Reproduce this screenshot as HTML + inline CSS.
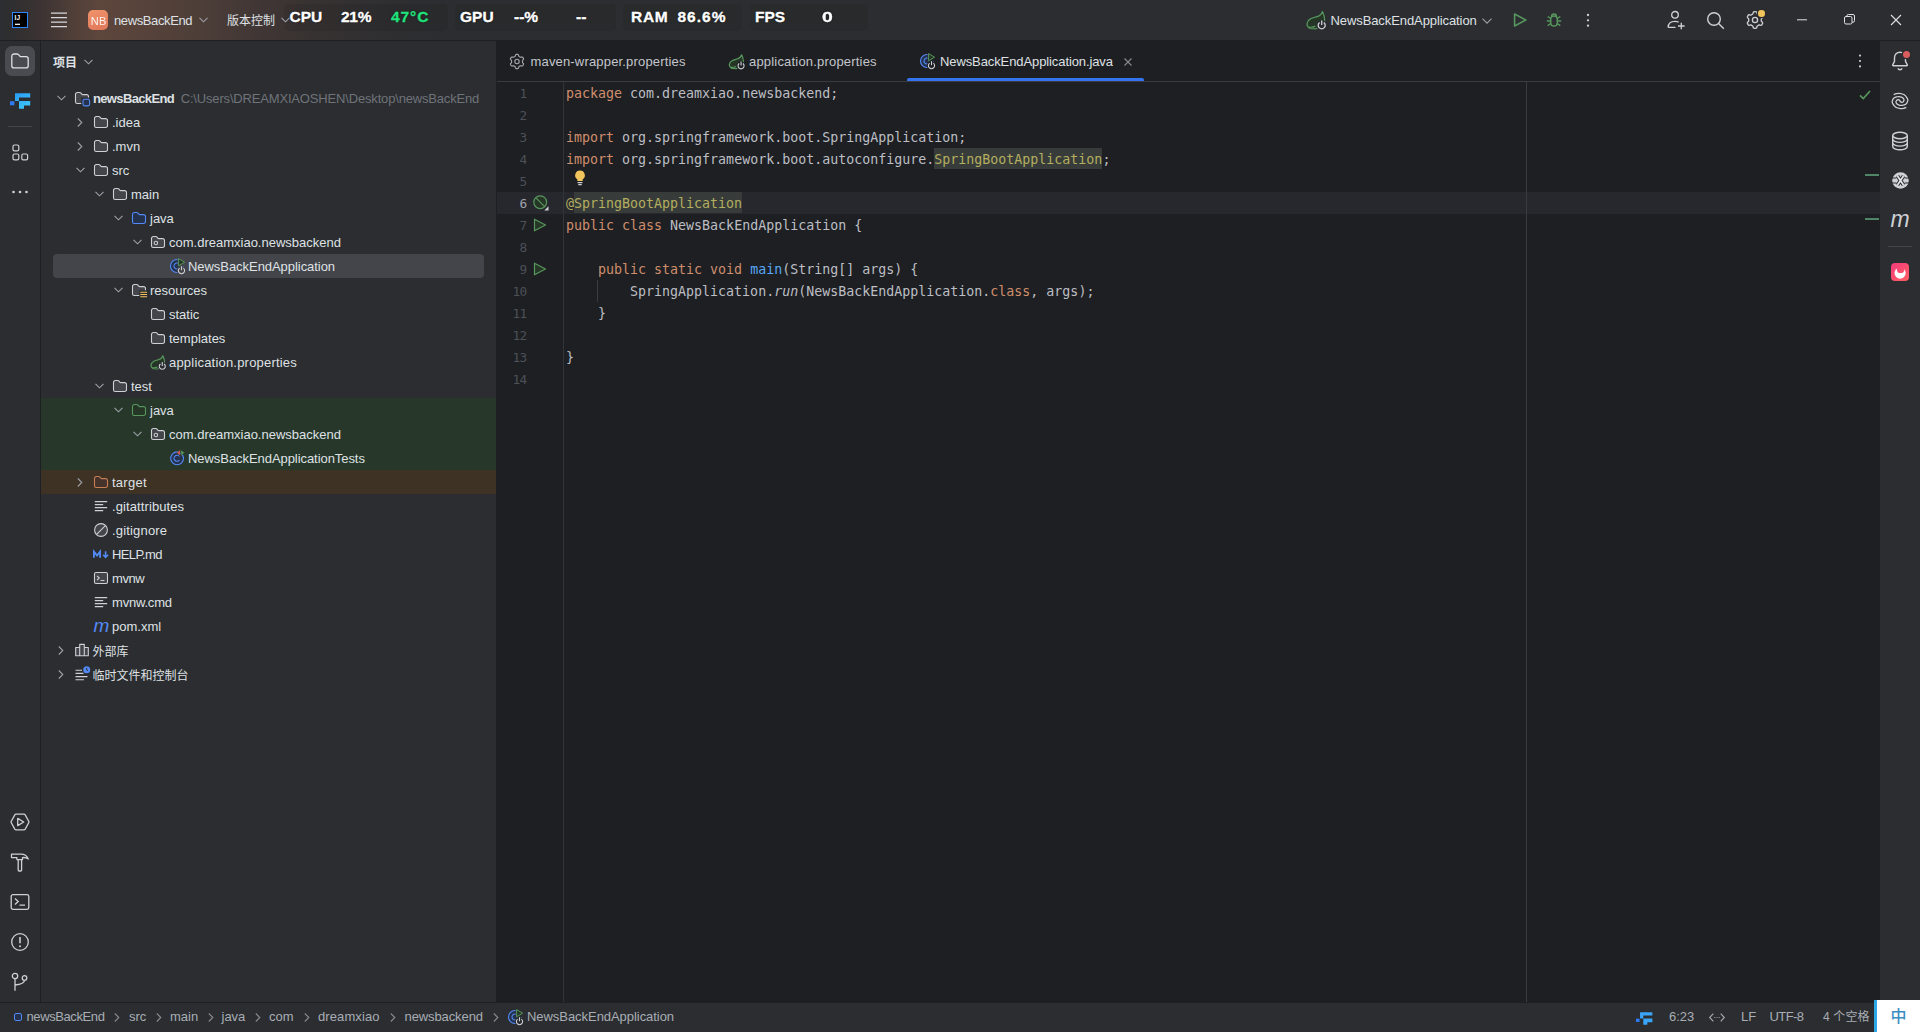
<!DOCTYPE html>
<html lang="zh-CN">
<head>
<meta charset="utf-8">
<title>newsBackEnd – NewsBackEndApplication.java</title>
<style>
*{box-sizing:border-box;margin:0;padding:0}
html,body{width:1920px;height:1032px;overflow:hidden;background:#1e1f22}
body{position:relative;font-family:"Liberation Sans","Noto Sans CJK SC",sans-serif;font-size:13px;color:#dfe1e5}
.abs{position:absolute}
svg{display:block;overflow:visible}
#titlebar{position:absolute;left:0;top:0;width:1920px;height:40px;background:#2b2d30;
  background-image:linear-gradient(90deg,#2b2d30 0px,#2f2e30 12px,#3b3332 40px,#4e3e38 70px,#5d463c 98px,#59443b 130px,#4d3e38 200px,#403635 260px,#393332 300px,#302f31 370px,#2b2d30 440px)}
#titlebar .t{position:absolute;white-space:nowrap;line-height:16px}
.hw{position:absolute;top:7px;font-weight:bold;font-size:15.5px;line-height:20px;color:#fff;white-space:nowrap;-webkit-text-stroke:0.3px #fff;text-shadow:0 0 2px rgba(0,0,0,.55)}
.hwbox{position:absolute;top:4px;height:27px;border-radius:5px;background:rgba(18,18,20,.11)}
#lstrip{position:absolute;left:0;top:40px;width:41px;height:962px;background:#2b2d30;border-right:1px solid #1e1f22}
#rstrip{position:absolute;left:1880px;top:40px;width:40px;height:962px;background:#2b2d30}
#proj{position:absolute;left:41px;top:40px;width:456px;height:962px;background:#2b2d30;border-right:1px solid #1e1f22}
.row{position:absolute;left:0;height:24px;width:455px}
.row .tx{position:absolute;top:1px;line-height:24px;white-space:nowrap;color:#dfe1e5}
.row .cj{font-size:12px;top:2px;margin-left:-0.5px}
.row svg{position:absolute}
#editor{position:absolute;left:497px;top:40px;width:1383px;height:962px;background:#1e1f22}
#tabs{position:absolute;left:0;top:0;width:1383px;height:42px;border-bottom:1px solid #393b40}
.tab{position:absolute;top:1px;height:41px;line-height:41px;white-space:nowrap;color:#c3c6cc}
.code,.ln{position:absolute;margin-top:1px;height:22px;line-height:22px;font-family:"DejaVu Sans Mono","Liberation Mono",monospace}
.code{left:69px;font-size:13.3px;white-space:pre;color:#bcbec4}
.ln{left:0;width:29.5px;text-align:right;font-size:12.8px;color:#4b5059;letter-spacing:-0.7px}
.hl{background:#373b39;padding:4px 0 2px}
.k{color:#cf8e6d}.a{color:#b3ae60}.f{color:#56a8f5}.i{font-style:italic}
#status{position:absolute;left:0;top:1002px;width:1920px;height:30px;background:#2b2d30;border-top:1px solid #1e1f22}
#status .s{position:absolute;top:0;line-height:28px;white-space:nowrap;color:#a8adb5}
</style>
</head>
<body>
<div id="titlebar">
  <svg class="abs" style="left:12px;top:12px" width="16" height="16" viewBox="0 0 16 16"><rect x="0.5" y="0.5" width="15" height="15" fill="#000" stroke="#2f86ff" stroke-width="1"/><rect x="3" y="11.7" width="5" height="1.2" fill="#fff"/></svg>
  <div class="t" style="left:14.5px;top:13.5px;font-size:6.5px;line-height:7px;font-weight:bold;color:#fff;letter-spacing:0.3px">IJ</div>
  <svg class="abs" style="left:51px;top:12px" width="16" height="16" viewBox="0 0 16 16" stroke="#d5d7dc" stroke-width="1.3"><path d="M0 1.1h16M0 5.6h16M0 10.1h16M0 14.6h16"/></svg>
  <div class="abs" style="left:88px;top:10px;width:20px;height:20px;border-radius:5px;background:linear-gradient(160deg,#f0946a,#e0765a)"></div>
  <div class="t" style="left:90.7px;top:13px;font-size:11px;line-height:16px;color:#fff;opacity:.92;letter-spacing:0.3px">NB</div>
  <div class="t" style="left:114px;top:13px;letter-spacing:-0.38px">newsBackEnd</div>
  <svg class="abs" style="left:198.5px;top:17px" width="9" height="6" viewBox="0 0 9 6" fill="none" stroke="#9da0a8" stroke-width="1.1"><path d="M0.500 0.8l4 4 4-4"/></svg>
  <div class="t" style="left:227px;top:13px;font-size:12px">版本控制</div>
  <div class="hwbox" style="left:284px;width:164px"></div>
  <div class="hwbox" style="left:455px;width:161px"></div>
  <div class="hwbox" style="left:623px;width:119px"></div>
  <div class="hwbox" style="left:750px;width:118px"></div>
  <svg class="abs" style="left:281px;top:17px" width="9" height="6" viewBox="0 0 9 6" fill="none" stroke="#9da0a8" stroke-width="1.1"><path d="M0.500 0.8l4 4 4-4"/></svg>
  <div class="hw" style="left:289.5px;">CPU</div>
  <div class="hw" style="left:341px;letter-spacing:-0.3px">21%</div>
  <div class="hw" style="left:391px;color:#1fe27c;-webkit-text-stroke-color:#1fe27c;letter-spacing:0.9px">47°C</div>
  <div class="hw" style="left:460px;">GPU</div>
  <div class="hw" style="left:514px;">--%</div>
  <div class="hw" style="left:576px;">--</div>
  <div class="hw" style="left:631px;letter-spacing:0.7px">RAM</div>
  <div class="hw" style="left:677.5px;letter-spacing:1px">86.6%</div>
  <div class="hw" style="left:755px;">FPS</div>
  <div class="hw" style="left:821.5px;transform:scaleX(1.25);transform-origin:0 0">0</div>
  <svg class="abs" style="left:1306px;top:11px" width="20" height="20" viewBox="0 0 20 20" fill="none"><path d="M16.500 0.5c-1 2.8-2.6 4.5-6 5.3-3.5.800-7 1.5-8.7 4.7-1.3 2.6-.3 5.5 2.2 7l6 .3 5-3 3.7-5.3c.100-3-.9-6.2-2.2-9z" fill="#253627" stroke="#57965c" stroke-width="1.2" stroke-linejoin="round"/><path d="M2.800 16.1c2.300.4 4.7 0 6.6-1" stroke="#57965c" stroke-width="1.2"/><circle cx="15.7" cy="14.3" r="5.3" fill="#2b2d30"/><path d="M13.55 11.54a3.5 3.5 0 1 0 4.31 0" stroke="#ced0d6" stroke-width="1.3"/><path d="M15.7 9.5v4.40" stroke="#ced0d6" stroke-width="1.3"/></svg>
  <div class="t" style="left:1330.5px;top:13px;letter-spacing:-0.09px">NewsBackEndApplication</div>
  <svg class="abs" style="left:1482px;top:18px" width="10" height="6" viewBox="0 0 10 6" fill="none" stroke="#9da0a8" stroke-width="1.1"><path d="M0.500 0.7l4.500 4.5 4.5-4.5"/></svg>
  <svg class="abs" style="left:1513px;top:13px" width="14" height="14" viewBox="0 0 14 14" fill="none" stroke="#57965c" stroke-width="1.6" stroke-linejoin="round"><path d="M1.600 1l11.200 6-11.2 6z"/></svg>
  <svg class="abs" style="left:1546px;top:12px" width="16" height="16" viewBox="0 0 16 16" fill="none" stroke="#57965c" stroke-width="1.5"><path d="M4.700 7.2a3.300 3.3 0 0 1 6.6 0v3.600a3.300 3.3 0 0 1-6.6 0z"/><path d="M5.600 4.3a2.400 2.4 0 0 1 4.8 0"/><path d="M4.700 6.5l-3-2M11.300 6.5l3-2M4.700 9H.800M11.300 9h3.900M4.700 11.5l-3 2.2M11.300 11.5l3 2.2"/></svg>
  <svg class="abs" style="left:1586px;top:13px" width="4" height="15" viewBox="0 0 4 15" fill="#ced0d6"><circle cx="2" cy="2" r="1.15"/><circle cx="2" cy="7.3" r="1.15"/><circle cx="2" cy="12.7" r="1.15"/></svg>
  <svg class="abs" style="left:1666px;top:10px" width="20" height="21" viewBox="0 0 20 21" fill="none" stroke="#ced0d6" stroke-width="1.35"><circle cx="9" cy="4.8" r="3.3"/><path d="M2.200 17.4c0-4 3-6 6.8-6 1.4 0 2.6.300 3.6.800M2.200 17.4H9.500M15.300 12.7v6.600M12 16h6.600"/></svg>
  <svg class="abs" style="left:1706px;top:11px" width="19" height="19" viewBox="0 0 19 19" fill="none" stroke="#ced0d6" stroke-width="1.4"><circle cx="8" cy="8" r="6.3"/><path d="M12.600 12.6l5.200 5.2"/></svg>
  <svg class="abs" style="left:1746px;top:11px" width="18" height="18" viewBox="0 0 18 18" fill="none" stroke="#ced0d6" stroke-width="1.3" stroke-linejoin="round"><path d="M9.0 0.7L9.5 0.7L10.1 0.8L10.6 1.1L10.9 1.9L11.1 2.8L11.4 3.2L11.8 3.3L12.2 3.5L12.5 3.8L12.8 4.0L13.3 4.1L14.2 3.8L15.0 3.7L15.6 3.9L15.9 4.4L16.2 4.8L16.4 5.3L16.7 5.8L16.6 6.4L16.1 7.1L15.4 7.7L15.2 8.2L15.3 8.6L15.3 9.0L15.3 9.4L15.2 9.8L15.4 10.3L16.1 10.9L16.6 11.6L16.7 12.2L16.4 12.7L16.2 13.1L15.9 13.6L15.6 14.1L15.0 14.3L14.2 14.2L13.3 13.9L12.8 14.0L12.5 14.2L12.2 14.5L11.8 14.7L11.4 14.8L11.1 15.2L10.9 16.1L10.6 16.9L10.1 17.2L9.5 17.3L9.0 17.3L8.5 17.3L7.9 17.2L7.4 16.9L7.1 16.1L6.9 15.2L6.6 14.8L6.2 14.7L5.9 14.5L5.5 14.2L5.2 14.0L4.7 13.9L3.8 14.2L3.0 14.3L2.4 14.1L2.1 13.6L1.8 13.2L1.6 12.7L1.3 12.2L1.4 11.6L1.9 10.9L2.6 10.3L2.8 9.8L2.7 9.4L2.7 9.0L2.7 8.6L2.8 8.2L2.6 7.7L1.9 7.1L1.4 6.4L1.3 5.8L1.6 5.3L1.8 4.8L2.1 4.4L2.4 3.9L3.0 3.7L3.8 3.8L4.7 4.1L5.2 4.0L5.5 3.8L5.8 3.5L6.2 3.3L6.6 3.2L6.9 2.8L7.1 1.9L7.4 1.1L7.9 0.8L8.5 0.7Z"/><circle cx="9" cy="9" r="2.6"/></svg>
  <div class="abs" style="left:1758.2px;top:10.4px;width:6.6px;height:6.6px;border-radius:50%;background:#f2c55c;box-shadow:0 0 0 1.2px #2b2d30"></div>
  <svg class="abs" style="left:1797px;top:19px" width="10" height="2" viewBox="0 0 10 2"><path d="M0 .8h10" stroke="#dfe1e5" stroke-width="1"/></svg>
  <svg class="abs" style="left:1844px;top:14px" width="11" height="11" viewBox="0 0 11 11" fill="none" stroke="#dfe1e5" stroke-width="1"><rect x=".5" y="2.5" width="7.5" height="7.5" rx="1.5"/><path d="M2.800 2.5v-.5a1.500 1.5 0 0 1 1.5-1.5h4.700a1.500 1.5 0 0 1 1.5 1.5v4.700a1.500 1.5 0 0 1-1.5 1.5h-1"/></svg>
  <svg class="abs" style="left:1891px;top:14.5px" width="10" height="10" viewBox="0 0 10 10" stroke="#dfe1e5" stroke-width="1.1"><path d="M0 0l10 10M10 0L0 10"/></svg>
</div>
<div id="lstrip">
  <div class="abs" style="left:5px;top:6px;width:30px;height:30px;border-radius:7px;background:#494b50"></div>
  <svg class="abs" style="left:10px;top:11px" width="20" height="20" viewBox="0 0 20 20" fill="none" stroke="#dfe1e5" stroke-width="1.3"><path d="M1.800 5.2a2.200 2.2 0 0 1 2.2-2.2h3c.600 0 1.1.200 1.5.600l1.500 1.6c.300.3.600.4 1 .4h5a2.200 2.2 0 0 1 2.2 2.2v6.900a2.200 2.2 0 0 1-2.2 2.2h-12a2.200 2.2 0 0 1-2.2-2.2z"/></svg>
  <svg class="abs" style="left:10px;top:53px" width="21" height="16" viewBox="0 0 21 16"><defs><linearGradient id="lg1" x1="0" y1="0" x2="0.6" y2="1"><stop offset="0" stop-color="#2b9bf5"/><stop offset="1" stop-color="#3cc4f8"/></linearGradient></defs><rect x="0" y="8.2" width="4.4" height="4.1" fill="#2f7bf6"/><path d="M5 0.3H20.200V4.400H9V8H20.200V12.500H14V15.700H9V8H5Z" fill="url(#lg1)"/></svg>
  <div class="abs" style="left:8px;top:86px;width:24px;height:1px;background:#43454a"></div>
  <svg class="abs" style="left:11.5px;top:104px" width="17" height="17" viewBox="0 0 17 17" fill="none" stroke="#ced0d6" stroke-width="1.2"><rect x="1" y="1" width="5.8" height="5.8" rx="1.4"/><rect x="1" y="10" width="5.8" height="5.8" rx="1.4"/><rect x="9.8" y="10" width="5.8" height="5.8" rx="1.4"/></svg>
  <svg class="abs" style="left:12px;top:150px" width="16" height="4" viewBox="0 0 16 4" fill="#ced0d6"><circle cx="1.5" cy="2" r="1.3"/><circle cx="8" cy="2" r="1.3"/><circle cx="14.5" cy="2" r="1.3"/></svg>
  <svg class="abs" style="left:10px;top:773px" width="20" height="18" viewBox="0 0 20 18" fill="none" stroke="#ced0d6" stroke-width="1.3" stroke-linejoin="round"><path d="M6 1.2h8c.500 0 .9.300 1.2.700l3.500 6.3c.300.5.300 1.1 0 1.6l-3.5 6.3c-.3.400-.7.700-1.2.700h-8c-.5 0-.9-.3-1.2-.7l-3.5-6.3c-.3-.5-.3-1.1 0-1.6l3.500-6.3c.300-.4.700-.7 1.2-.7z"/><path d="M7.700 5.4l6 3.6-6 3.6z"/></svg>
  <svg class="abs" style="left:10px;top:813px" width="20" height="19" viewBox="0 0 20 19" fill="none" stroke="#ced0d6" stroke-width="1.3" stroke-linejoin="round"><path d="M1.500 1.2h9.500c3.200 0 6 1.8 7.3 4.8-1.8-1.3-3.8-1.7-5.8-1.4v2h-5.6v-2h-5.4z"/><path d="M8.200 6.6v10.400a1 1 0 0 0 1 1h1.400a1 1 0 0 0 1-1v-10.4"/></svg>
  <svg class="abs" style="left:10px;top:853px" width="20" height="18" viewBox="0 0 20 18" fill="none" stroke="#ced0d6" stroke-width="1.3"><rect x="1.2" y="1.7" width="17.6" height="14.6" rx="1.8"/><path d="M5 5.6l3.200 2.9-3.2 2.9M9.500 12.2h5.500"/></svg>
  <svg class="abs" style="left:10px;top:892px" width="20" height="20" viewBox="0 0 20 20" fill="none" stroke="#ced0d6" stroke-width="1.3"><circle cx="10" cy="10" r="8.3"/><path d="M10 5v6.300" stroke-width="1.6"/><circle cx="10" cy="14.2" r="1" fill="#ced0d6" stroke="none"/></svg>
  <svg class="abs" style="left:11px;top:932px" width="18" height="20" viewBox="0 0 18 20" fill="none" stroke="#ced0d6" stroke-width="1.3"><circle cx="4" cy="4" r="2.7"/><circle cx="13.5" cy="6" r="2.3"/><path d="M4 6.7v12M4 13c5.500-.5 9.3-1.3 9.5-4.7"/></svg>
</div>
<div id="proj">
  <div class="abs" style="left:12px;top:10.5px;line-height:24px;font-size:12px;font-weight:700;color:#dfe1e5;white-space:nowrap">项目</div>
  <svg class="abs" style="left:42.5px;top:19px" width="9" height="6" viewBox="0 0 9 6" fill="none" stroke="#9da0a8" stroke-width="1.1"><path d="M0.500 0.8l4 4 4-4"/></svg>
  <div class="abs" style="left:0;top:358px;width:455px;height:72px;background:#27382a"></div>
  <div class="abs" style="left:0;top:430px;width:455px;height:24px;background:#3d3223"></div>
  <div class="abs" style="left:12px;top:214px;width:431px;height:24px;border-radius:4px;background:#43454a"></div>
  <div class="row" style="top:46px"><svg class="chev" style="left:15.5px;top:9px" width="9" height="6" viewBox="0 0 9 6" fill="none" stroke="#9da0a8" stroke-width="1.1"><path d="M0.500 0.8l4 4 4-4"/></svg><svg class="ico" style="left:33px;top:4px" width="16" height="16" viewBox="0 0 16 16" fill="none"><path d="M1.5 4.3a1.8 1.8 0 0 1 1.8-1.8h2.300c.500 0 .9.200 1.2.500l1.200 1.3c.200.2.400.3.700.3h4a1.800 1.8 0 0 1 1.8 1.8v5.300a1.800 1.8 0 0 1-1.8 1.8h-9.4a1.800 1.8 0 0 1-1.8-1.8z" fill="#43454a" stroke="#ced0d6" stroke-width="1.1"/><rect x="7.2" y="7.6" width="9.6" height="9.6" fill="#2b2d30"/><rect x="9" y="9.3" width="6.6" height="6.6" rx="1.6" fill="#25324d" stroke="#548af7" stroke-width="1.1"/></svg><span class="tx" style="left:52px;font-weight:bold;letter-spacing:-0.65px">newsBackEnd</span><span class="tx" style="left:139.7px;color:#6f737a;letter-spacing:-0.17px">C:\Users\DREAMXIAOSHEN\Desktop\newsBackEnd</span></div>
  <div class="row" style="top:70px"><svg class="chev" style="left:35.7px;top:7.5px" width="6" height="9" viewBox="0 0 6 9" fill="none" stroke="#9da0a8" stroke-width="1.1"><path d="M0.800 0.5l4 4-4 4"/></svg><svg class="ico" style="left:52px;top:4px" width="16" height="16" viewBox="0 0 16 16" fill="none"><path d="M1.5 4.3a1.8 1.8 0 0 1 1.8-1.8h2.300c.500 0 .9.200 1.2.500l1.200 1.3c.200.2.400.3.700.3h4a1.800 1.8 0 0 1 1.8 1.8v5.300a1.800 1.8 0 0 1-1.8 1.8h-9.4a1.800 1.8 0 0 1-1.8-1.8z" fill="#43454a" stroke="#ced0d6" stroke-width="1.1"/></svg><span class="tx" style="left:71px;">.idea</span></div>
  <div class="row" style="top:94px"><svg class="chev" style="left:35.7px;top:7.5px" width="6" height="9" viewBox="0 0 6 9" fill="none" stroke="#9da0a8" stroke-width="1.1"><path d="M0.800 0.5l4 4-4 4"/></svg><svg class="ico" style="left:52px;top:4px" width="16" height="16" viewBox="0 0 16 16" fill="none"><path d="M1.5 4.3a1.8 1.8 0 0 1 1.8-1.8h2.300c.500 0 .9.200 1.2.500l1.200 1.3c.200.2.400.3.700.3h4a1.800 1.8 0 0 1 1.8 1.8v5.300a1.800 1.8 0 0 1-1.8 1.8h-9.4a1.800 1.8 0 0 1-1.8-1.8z" fill="#43454a" stroke="#ced0d6" stroke-width="1.1"/></svg><span class="tx" style="left:71px;">.mvn</span></div>
  <div class="row" style="top:118px"><svg class="chev" style="left:34.5px;top:9px" width="9" height="6" viewBox="0 0 9 6" fill="none" stroke="#9da0a8" stroke-width="1.1"><path d="M0.500 0.8l4 4 4-4"/></svg><svg class="ico" style="left:52px;top:4px" width="16" height="16" viewBox="0 0 16 16" fill="none"><path d="M1.5 4.3a1.8 1.8 0 0 1 1.8-1.8h2.300c.500 0 .9.200 1.2.500l1.200 1.3c.200.2.400.3.700.3h4a1.800 1.8 0 0 1 1.8 1.8v5.300a1.800 1.8 0 0 1-1.8 1.8h-9.4a1.800 1.8 0 0 1-1.8-1.8z" fill="#43454a" stroke="#ced0d6" stroke-width="1.1"/></svg><span class="tx" style="left:71px;">src</span></div>
  <div class="row" style="top:142px"><svg class="chev" style="left:53.5px;top:9px" width="9" height="6" viewBox="0 0 9 6" fill="none" stroke="#9da0a8" stroke-width="1.1"><path d="M0.500 0.8l4 4 4-4"/></svg><svg class="ico" style="left:71px;top:4px" width="16" height="16" viewBox="0 0 16 16" fill="none"><path d="M1.5 4.3a1.8 1.8 0 0 1 1.8-1.8h2.300c.500 0 .9.200 1.2.500l1.200 1.3c.200.2.400.3.700.3h4a1.800 1.8 0 0 1 1.8 1.8v5.300a1.800 1.8 0 0 1-1.8 1.8h-9.4a1.800 1.8 0 0 1-1.8-1.8z" fill="#43454a" stroke="#ced0d6" stroke-width="1.1"/></svg><span class="tx" style="left:90px;">main</span></div>
  <div class="row" style="top:166px"><svg class="chev" style="left:72.5px;top:9px" width="9" height="6" viewBox="0 0 9 6" fill="none" stroke="#9da0a8" stroke-width="1.1"><path d="M0.500 0.8l4 4 4-4"/></svg><svg class="ico" style="left:90px;top:4px" width="16" height="16" viewBox="0 0 16 16" fill="none"><path d="M1.5 4.3a1.8 1.8 0 0 1 1.8-1.8h2.300c.500 0 .9.200 1.2.500l1.200 1.3c.200.2.400.3.700.3h4a1.800 1.8 0 0 1 1.8 1.8v5.300a1.800 1.8 0 0 1-1.8 1.8h-9.4a1.800 1.8 0 0 1-1.8-1.8z" fill="#25324d" stroke="#548af7" stroke-width="1.1"/></svg><span class="tx" style="left:109px;">java</span></div>
  <div class="row" style="top:190px"><svg class="chev" style="left:91.5px;top:9px" width="9" height="6" viewBox="0 0 9 6" fill="none" stroke="#9da0a8" stroke-width="1.1"><path d="M0.500 0.8l4 4 4-4"/></svg><svg class="ico" style="left:109px;top:4px" width="16" height="16" viewBox="0 0 16 16" fill="none"><path d="M1.5 4.3a1.8 1.8 0 0 1 1.8-1.8h2.300c.500 0 .9.200 1.2.500l1.200 1.3c.200.2.400.3.700.3h4a1.800 1.8 0 0 1 1.8 1.8v5.300a1.800 1.8 0 0 1-1.8 1.8h-9.4a1.800 1.8 0 0 1-1.8-1.8z" fill="#43454a" stroke="#ced0d6" stroke-width="1.1"/><circle cx="5.9" cy="9" r="1.75" stroke="#ced0d6" stroke-width="1.05"/></svg><span class="tx" style="left:128px;">com.dreamxiao.newsbackend</span></div>
  <div class="row" style="top:214px"><svg class="ico" style="left:128px;top:4px" width="16" height="16" viewBox="0 0 16 16" fill="none"><circle cx="8" cy="8" r="6.5" fill="#25324d" stroke="#548af7" stroke-width="1.1"/><path d="M10.300 6.1a3 3 0 1 0 0 3.8" stroke="#548af7" stroke-width="1.1"/><rect x="8.6" y="-1" width="8.5" height="9" fill="#43454a"/><path d="M9.600 0.6l6 3.6-6 3.6z" fill="#253627" stroke="#57965c" stroke-width="1" stroke-linejoin="round"/><circle cx="12.5" cy="12.6" r="4.6" fill="#43454a"/><path d="M10.59 10.16a3.1 3.1 0 1 0 3.82 0" stroke="#ced0d6" stroke-width="1.1"/><path d="M12.5 8.2v4.00" stroke="#ced0d6" stroke-width="1.1"/></svg><span class="tx" style="left:147px;letter-spacing:-0.05px">NewsBackEndApplication</span></div>
  <div class="row" style="top:238px"><svg class="chev" style="left:72.5px;top:9px" width="9" height="6" viewBox="0 0 9 6" fill="none" stroke="#9da0a8" stroke-width="1.1"><path d="M0.500 0.8l4 4 4-4"/></svg><svg class="ico" style="left:90px;top:4px" width="16" height="16" viewBox="0 0 16 16" fill="none"><path d="M1.5 4.3a1.8 1.8 0 0 1 1.8-1.8h2.300c.500 0 .9.200 1.2.500l1.200 1.3c.200.2.400.3.700.3h4a1.800 1.8 0 0 1 1.8 1.8v5.300a1.800 1.8 0 0 1-1.8 1.8h-9.4a1.800 1.8 0 0 1-1.8-1.8z" fill="#43454a" stroke="#ced0d6" stroke-width="1.1"/><rect x="8.3" y="8.3" width="9" height="9" fill="#2b2d30"/><path d="M9.300 10.3h6.800M9.300 12.5h6.800M9.300 14.7h6.800" stroke="#f2c55c" stroke-width="1.1"/></svg><span class="tx" style="left:109px;">resources</span></div>
  <div class="row" style="top:262px"><svg class="ico" style="left:109px;top:4px" width="16" height="16" viewBox="0 0 16 16" fill="none"><path d="M1.5 4.3a1.8 1.8 0 0 1 1.8-1.8h2.300c.500 0 .9.200 1.2.500l1.200 1.3c.200.2.400.3.700.3h4a1.800 1.8 0 0 1 1.8 1.8v5.300a1.800 1.8 0 0 1-1.8 1.8h-9.4a1.800 1.8 0 0 1-1.8-1.8z" fill="#43454a" stroke="#ced0d6" stroke-width="1.1"/></svg><span class="tx" style="left:128px;">static</span></div>
  <div class="row" style="top:286px"><svg class="ico" style="left:109px;top:4px" width="16" height="16" viewBox="0 0 16 16" fill="none"><path d="M1.5 4.3a1.8 1.8 0 0 1 1.8-1.8h2.300c.500 0 .9.200 1.2.500l1.200 1.3c.200.2.400.3.700.3h4a1.800 1.8 0 0 1 1.8 1.8v5.300a1.800 1.8 0 0 1-1.8 1.8h-9.4a1.800 1.8 0 0 1-1.8-1.8z" fill="#43454a" stroke="#ced0d6" stroke-width="1.1"/></svg><span class="tx" style="left:128px;">templates</span></div>
  <div class="row" style="top:310px"><svg class="ico" style="left:109px;top:4px" width="16" height="16" viewBox="0 0 16 16" fill="none"><g transform="translate(0.2,1.3) scale(0.77)"><path d="M16.500 0.5c-1 2.8-2.6 4.5-6 5.3-3.5.800-7 1.5-8.7 4.7-1.3 2.6-.3 5.5 2.2 7l6 .3 5-3 3.7-5.3c.100-3-.9-6.2-2.2-9z" fill="#253627" stroke="#57965c" stroke-width="1.56" stroke-linejoin="round"/><path d="M2.800 16.1c2.300.4 4.7 0 6.6-1" stroke="#57965c" stroke-width="1.56"/></g><circle cx="12.29" cy="12.31" r="4.5" fill="#2b2d30"/><path d="M10.44 9.95a3.0 3.0 0 1 0 3.69 0" stroke="#ced0d6" stroke-width="1.1"/><path d="M12.29 8.01v3.90" stroke="#ced0d6" stroke-width="1.1"/></svg><span class="tx" style="left:128px;letter-spacing:0.2px">application.properties</span></div>
  <div class="row" style="top:334px"><svg class="chev" style="left:53.5px;top:9px" width="9" height="6" viewBox="0 0 9 6" fill="none" stroke="#9da0a8" stroke-width="1.1"><path d="M0.500 0.8l4 4 4-4"/></svg><svg class="ico" style="left:71px;top:4px" width="16" height="16" viewBox="0 0 16 16" fill="none"><path d="M1.5 4.3a1.8 1.8 0 0 1 1.8-1.8h2.300c.500 0 .9.200 1.2.500l1.200 1.3c.200.2.400.3.700.3h4a1.800 1.8 0 0 1 1.8 1.8v5.300a1.800 1.8 0 0 1-1.8 1.8h-9.4a1.800 1.8 0 0 1-1.8-1.8z" fill="#43454a" stroke="#ced0d6" stroke-width="1.1"/></svg><span class="tx" style="left:90px;">test</span></div>
  <div class="row" style="top:358px"><svg class="chev" style="left:72.5px;top:9px" width="9" height="6" viewBox="0 0 9 6" fill="none" stroke="#9da0a8" stroke-width="1.1"><path d="M0.500 0.8l4 4 4-4"/></svg><svg class="ico" style="left:90px;top:4px" width="16" height="16" viewBox="0 0 16 16" fill="none"><path d="M1.5 4.3a1.8 1.8 0 0 1 1.8-1.8h2.300c.500 0 .9.200 1.2.500l1.200 1.3c.200.2.400.3.700.3h4a1.800 1.8 0 0 1 1.8 1.8v5.300a1.800 1.8 0 0 1-1.8 1.8h-9.4a1.800 1.8 0 0 1-1.8-1.8z" fill="#253627" stroke="#57965c" stroke-width="1.1"/></svg><span class="tx" style="left:109px;">java</span></div>
  <div class="row" style="top:382px"><svg class="chev" style="left:91.5px;top:9px" width="9" height="6" viewBox="0 0 9 6" fill="none" stroke="#9da0a8" stroke-width="1.1"><path d="M0.500 0.8l4 4 4-4"/></svg><svg class="ico" style="left:109px;top:4px" width="16" height="16" viewBox="0 0 16 16" fill="none"><path d="M1.5 4.3a1.8 1.8 0 0 1 1.8-1.8h2.300c.500 0 .9.200 1.2.500l1.200 1.3c.200.2.400.3.700.3h4a1.800 1.8 0 0 1 1.8 1.8v5.300a1.800 1.8 0 0 1-1.8 1.8h-9.4a1.800 1.8 0 0 1-1.8-1.8z" fill="#43454a" stroke="#ced0d6" stroke-width="1.1"/><circle cx="5.9" cy="9" r="1.75" stroke="#ced0d6" stroke-width="1.05"/></svg><span class="tx" style="left:128px;">com.dreamxiao.newsbackend</span></div>
  <div class="row" style="top:406px"><svg class="ico" style="left:128px;top:4px" width="16" height="16" viewBox="0 0 16 16" fill="none"><circle cx="8.1" cy="8.3" r="6.4" fill="#25324d" stroke="#548af7" stroke-width="1.1"/><path d="M10.400 6.5a3 3 0 1 0 0 3.6" stroke="#548af7" stroke-width="1.1"/><path d="M11.300 -0.2v6l-3.7-3z" fill="#db5c5c" stroke="#27382a" stroke-width="0.5"/><path d="M11.900 -0.2v6l3.700-3z" fill="#57965c" stroke="#27382a" stroke-width="0.5"/></svg><span class="tx" style="left:147px;letter-spacing:-0.06px">NewsBackEndApplicationTests</span></div>
  <div class="row" style="top:430px"><svg class="chev" style="left:35.7px;top:7.5px" width="6" height="9" viewBox="0 0 6 9" fill="none" stroke="#9da0a8" stroke-width="1.1"><path d="M0.800 0.5l4 4-4 4"/></svg><svg class="ico" style="left:52px;top:4px" width="16" height="16" viewBox="0 0 16 16" fill="none"><path d="M1.5 4.3a1.8 1.8 0 0 1 1.8-1.8h2.300c.500 0 .9.200 1.2.500l1.200 1.3c.200.2.400.3.700.3h4a1.800 1.8 0 0 1 1.8 1.8v5.300a1.800 1.8 0 0 1-1.8 1.8h-9.4a1.800 1.8 0 0 1-1.8-1.8z" fill="#45322b" stroke="#c77d55" stroke-width="1.1"/></svg><span class="tx" style="left:71px;letter-spacing:0.25px">target</span></div>
  <div class="row" style="top:454px"><svg class="ico" style="left:52px;top:4px" width="16" height="16" viewBox="0 0 16 16" fill="none"><path d="M1.800 3.6h12.400M1.800 6.6h8.400M1.800 9.6h12.400M1.800 12.6h8.400" stroke="#ced0d6" stroke-width="1.1"/></svg><span class="tx" style="left:71px;letter-spacing:0.1px">.gitattributes</span></div>
  <div class="row" style="top:478px"><svg class="ico" style="left:52px;top:4px" width="16" height="16" viewBox="0 0 16 16" fill="none"><circle cx="8" cy="8" r="6.4" fill="#43454a" stroke="#ced0d6" stroke-width="1.1"/><path d="M3.600 12.4l8.800-8.8" stroke="#ced0d6" stroke-width="1.1"/></svg><span class="tx" style="left:71px;letter-spacing:0.17px">.gitignore</span></div>
  <div class="row" style="top:502px"><svg class="ico" style="left:52px;top:4px" width="16" height="16" viewBox="0 0 16 16" fill="none"><path d="M0.900 11.8V5.600l3.100 3.9 3.1-3.9v6.200" stroke="#548af7" stroke-width="1.8" stroke-linejoin="miter"/><path d="M12.600 5.2v6M10.100 8.8l2.500 2.5 2.5-2.5" stroke="#548af7" stroke-width="1.6"/></svg><span class="tx" style="left:71px;letter-spacing:-0.6px">HELP.md</span></div>
  <div class="row" style="top:526px"><svg class="ico" style="left:52px;top:4px" width="16" height="16" viewBox="0 0 16 16" fill="none"><rect x="1.5" y="2.5" width="13" height="11" rx="1.5" fill="#43454a" stroke="#ced0d6" stroke-width="1.1"/><path d="M4 5.8l2.300 2.2-2.3 2.2M7.600 10.5h3.800" stroke="#ced0d6" stroke-width="1.1"/></svg><span class="tx" style="left:71px;letter-spacing:-0.4px">mvnw</span></div>
  <div class="row" style="top:550px"><svg class="ico" style="left:52px;top:4px" width="16" height="16" viewBox="0 0 16 16" fill="none"><path d="M1.800 3.6h12.400M1.800 6.6h8.400M1.800 9.6h12.400M1.800 12.6h8.400" stroke="#ced0d6" stroke-width="1.1"/></svg><span class="tx" style="left:71px;letter-spacing:-0.2px">mvnw.cmd</span></div>
  <div class="row" style="top:574px"><span class="tx" style="left:52.5px;top:0;font-style:italic;font-size:19px;color:#548af7;letter-spacing:-1px">m</span><span class="tx" style="left:71px;">pom.xml</span></div>
  <div class="row" style="top:598px"><svg class="chev" style="left:16.7px;top:7.5px" width="6" height="9" viewBox="0 0 6 9" fill="none" stroke="#9da0a8" stroke-width="1.1"><path d="M0.800 0.5l4 4-4 4"/></svg><svg class="ico" style="left:33px;top:4px" width="16" height="16" viewBox="0 0 16 16" fill="none"><path d="M1.700 5.5h4v8.300h-4zM5.700 2.4h4.600v11.400h-4.6zM10.300 5.5h4v8.300h-4z" fill="#43454a" stroke="#ced0d6" stroke-width="1.1" stroke-linejoin="round"/></svg><span class="tx cj" style="left:52px">外部库</span></div>
  <div class="row" style="top:622px"><svg class="chev" style="left:16.7px;top:7.5px" width="6" height="9" viewBox="0 0 6 9" fill="none" stroke="#9da0a8" stroke-width="1.1"><path d="M0.800 0.5l4 4-4 4"/></svg><svg class="ico" style="left:33px;top:4px" width="16" height="16" viewBox="0 0 16 16" fill="none"><path d="M1.500 4.2h6.500M1.500 7.4h8M1.500 10.6h12M1.500 13.8h8.500" stroke="#ced0d6" stroke-width="1.1"/><circle cx="12.7" cy="3.7" r="3.5" fill="#548af7"/><path d="M12.700 1.8v2.100l1.400.9" stroke="#2b2d30" stroke-width="1"/></svg><span class="tx cj" style="left:52px">临时文件和控制台</span></div>
</div>
<div id="editor">
  <div id="tabs">
    <svg class="abs" style="left:12px;top:12.5px" width="16" height="17" viewBox="0 0 16 17"><path d="M8.0 1.4L8.5 1.4L8.9 1.5L9.3 1.8L9.6 2.5L9.8 3.2L10.1 3.5L10.4 3.7L10.7 3.8L11.0 4.0L11.3 4.2L11.7 4.3L12.4 4.1L13.2 4.0L13.6 4.2L13.9 4.6L14.1 4.9L14.4 5.4L14.6 5.8L14.5 6.3L14.0 6.9L13.5 7.4L13.4 7.8L13.4 8.1L13.4 8.5L13.4 8.9L13.4 9.2L13.5 9.6L14.0 10.1L14.5 10.7L14.6 11.2L14.4 11.6L14.1 12.0L13.9 12.4L13.6 12.8L13.2 13.0L12.4 12.9L11.7 12.7L11.3 12.8L11.0 13.0L10.7 13.2L10.4 13.3L10.1 13.5L9.8 13.8L9.6 14.5L9.3 15.2L8.9 15.5L8.5 15.6L8.0 15.6L7.5 15.6L7.1 15.5L6.7 15.2L6.4 14.5L6.2 13.8L5.9 13.5L5.6 13.3L5.3 13.2L5.0 13.0L4.7 12.8L4.3 12.7L3.6 12.9L2.8 13.0L2.4 12.8L2.1 12.4L1.9 12.1L1.6 11.6L1.4 11.2L1.5 10.7L2.0 10.1L2.5 9.6L2.6 9.2L2.6 8.9L2.6 8.5L2.6 8.1L2.6 7.8L2.5 7.4L2.0 6.9L1.5 6.3L1.4 5.8L1.6 5.4L1.9 4.9L2.1 4.6L2.4 4.2L2.8 4.0L3.6 4.1L4.3 4.3L4.7 4.2L5.0 4.0L5.3 3.8L5.6 3.7L5.9 3.5L6.2 3.2L6.4 2.5L6.7 1.8L7.1 1.5L7.5 1.4Z" stroke="#a4a7ae" stroke-width="1.1" stroke-linejoin="round" fill="none"/><circle cx="8" cy="8.5" r="2.2" stroke="#a4a7ae" stroke-width="1.1" fill="none"/></svg>
    <div class="tab" style="left:33.5px;letter-spacing:0.17px">maven-wrapper.properties</div>
    <svg class="abs" style="left:231px;top:13px" width="17" height="17" viewBox="0 0 17 17" fill="none"><g transform="translate(0.5,1.4) scale(0.8)"><path d="M16.500 0.5c-1 2.8-2.6 4.5-6 5.3-3.5.800-7 1.5-8.7 4.7-1.3 2.6-.3 5.5 2.2 7l6 .3 5-3 3.7-5.3c.100-3-.9-6.2-2.2-9z" fill="#253627" stroke="#57965c" stroke-width="1.5" stroke-linejoin="round"/><path d="M2.800 16.1c2.300.4 4.7 0 6.6-1" stroke="#57965c" stroke-width="1.5"/></g><circle cx="13.06" cy="12.84" r="4.5" fill="#1e1f22"/><path d="M11.21 10.48a3.0 3.0 0 1 0 3.69 0" stroke="#ced0d6" stroke-width="1.1"/><path d="M13.06 8.54v3.90" stroke="#ced0d6" stroke-width="1.1"/></svg>
    <div class="tab" style="left:252px;letter-spacing:0.19px">application.properties</div>
    <svg class="abs" style="left:422px;top:13px" width="17" height="17" viewBox="0 0 17 17" fill="none"><circle cx="8" cy="8" r="6.5" fill="#25324d" stroke="#548af7" stroke-width="1.1"/><path d="M10.300 6.1a3 3 0 1 0 0 3.8" stroke="#548af7" stroke-width="1.1"/><rect x="8.6" y="-1" width="8.5" height="9" fill="#1e1f22"/><path d="M9.600 0.6l6 3.6-6 3.6z" fill="#253627" stroke="#57965c" stroke-width="1" stroke-linejoin="round"/><circle cx="12.5" cy="12.6" r="4.6" fill="#1e1f22"/><path d="M10.59 10.16a3.1 3.1 0 1 0 3.82 0" stroke="#ced0d6" stroke-width="1.1"/><path d="M12.5 8.2v4.00" stroke="#ced0d6" stroke-width="1.1"/></svg>
    <div class="tab" style="left:443px;letter-spacing:-0.1px;color:#dfe1e5">NewsBackEndApplication.java</div>
    <svg class="abs" style="left:627px;top:17.5px" width="8" height="8" viewBox="0 0 8 8" stroke="#868a91" stroke-width="1.1"><path d="M0.500 0.5l7 7M7.500 0.5l-7 7"/></svg>
    <div class="abs" style="left:410px;top:38px;width:237px;height:3px;border-radius:2px 2px 0 0;background:#3574f0"></div>
    <svg class="abs" style="left:1361px;top:14px" width="4" height="14" viewBox="0 0 4 14" fill="#ced0d6"><circle cx="2" cy="1.6" r="1.05"/><circle cx="2" cy="7" r="1.05"/><circle cx="2" cy="12.4" r="1.05"/></svg>
  </div>
  <div class="abs" style="left:0;top:152px;width:1383px;height:22px;background:#26282e"></div>
  <div class="abs" style="left:66px;top:42px;width:1px;height:920px;background:#313438"></div>
  <div class="abs" style="left:1029px;top:42px;width:1px;height:920px;background:#393b40"></div>
  <div class="abs" style="left:99.5px;top:240px;width:1px;height:22px;background:#393b40"></div>
  <div class="ln" style="top:42px">1</div><div class="code" style="top:42px"><span class="k">package</span> com.dreamxiao.newsbackend;</div>
  <div class="ln" style="top:64px">2</div><div class="code" style="top:64px"></div>
  <div class="ln" style="top:86px">3</div><div class="code" style="top:86px"><span class="k">import</span> org.springframework.boot.SpringApplication;</div>
  <div class="ln" style="top:108px">4</div><div class="code" style="top:108px"><span class="k">import</span> org.springframework.boot.autoconfigure.<span class="a hl">SpringBootApplication</span>;</div>
  <div class="ln" style="top:130px">5</div><div class="code" style="top:130px"></div>
  <div class="ln" style="top:152px;color:#a1a3ab">6</div><div class="code" style="top:152px"><span class="a">@<span class="hl">SpringBootApplication</span></span></div>
  <div class="ln" style="top:174px">7</div><div class="code" style="top:174px"><span class="k">public class</span> NewsBackEndApplication {</div>
  <div class="ln" style="top:196px">8</div><div class="code" style="top:196px"></div>
  <div class="ln" style="top:218px">9</div><div class="code" style="top:218px">    <span class="k">public static void</span> <span class="f">main</span>(String[] args) {</div>
  <div class="ln" style="top:240px">10</div><div class="code" style="top:240px">        SpringApplication.<span class="i">run</span>(NewsBackEndApplication.<span class="k">class</span>, args);</div>
  <div class="ln" style="top:262px">11</div><div class="code" style="top:262px">    }</div>
  <div class="ln" style="top:284px">12</div><div class="code" style="top:284px"></div>
  <div class="ln" style="top:306px">13</div><div class="code" style="top:306px">}</div>
  <div class="ln" style="top:328px">14</div><div class="code" style="top:328px"></div>
  <svg class="abs" style="left:35.7px;top:154.8px" width="17" height="17" viewBox="0 0 17 17" fill="none"><circle cx="7.2" cy="7.2" r="6.4" fill="#253627" stroke="#57965c" stroke-width="1.2"/><path d="M2.700 2.7l9 9" stroke="#57965c" stroke-width="1.2"/><path d="M15.500 11.3v4.200h-4.2z" fill="#ced0d6"/></svg>
  <svg class="abs" style="left:36px;top:178px" width="14" height="14" viewBox="0 0 14 14" fill="#253627" stroke="#57965c" stroke-width="1.2" stroke-linejoin="round"><path d="M1.500 1.2l11 5.8-11 5.8z"/></svg>
  <svg class="abs" style="left:36px;top:222px" width="14" height="14" viewBox="0 0 14 14" fill="#253627" stroke="#57965c" stroke-width="1.2" stroke-linejoin="round"><path d="M1.500 1.2l11 5.8-11 5.8z"/></svg>
  <svg class="abs" style="left:77px;top:130px" width="12" height="16" viewBox="0 0 12 16"><path d="M6 0.5a4.800 4.8 0 0 0-2.7 8.8v1.700h5.400v-1.7a4.800 4.8 0 0 0-2.7-8.8z" fill="#f2c55c"/><path d="M3.600 12.6h4.800M4.300 14.6h3.400" stroke="#ced0d6" stroke-width="1.1"/></svg>
  <svg class="abs" style="left:1362px;top:50px" width="12" height="10" viewBox="0 0 12 10" fill="none" stroke="#57965c" stroke-width="1.7"><path d="M1 5.3l3.300 3.2 6.7-7.5"/></svg>
  <div class="abs" style="left:1368px;top:134px;width:14px;height:2px;background:#4f8466"></div>
  <div class="abs" style="left:1368px;top:178px;width:14px;height:2px;background:#4f8466"></div>
</div>
<div id="rstrip">
  <svg class="abs" style="left:11px;top:11px" width="18" height="20" viewBox="0 0 18 20" fill="none" stroke="#ced0d6" stroke-width="1.4" stroke-linejoin="round"><path d="M9 1.2c-3.2 0-5.5 2.5-5.5 5.6v3.600l-1.8 3.4c-.2.400.1.900.6.900h13.400c.500 0 .8-.5.600-.9l-1.8-3.4v-3.6c0-3.1-2.3-5.6-5.5-5.6z"/><path d="M6.800 17.3c.500.9 1.3 1.4 2.2 1.4s1.700-.5 2.2-1.4"/></svg>
  <div class="abs" style="left:22.8px;top:10.8px;width:7.4px;height:7.4px;border-radius:50%;background:#db5c5c;box-shadow:0 0 0 1.3px #2b2d30"></div>
  <svg class="abs" style="left:11px;top:52px" width="18" height="18" viewBox="0 0 18 18" fill="none" stroke="#ced0d6" stroke-width="1.3"><path d="M2.7 2.5C3.1 2.4 4.2 1.9 5.2 1.7C6.2 1.5 7.2 1.2 8.6 1.4C9.9 1.6 12.0 2.0 13.3 2.8C14.6 3.6 15.7 5.3 16.3 6.3C16.9 7.3 17.0 7.7 16.8 8.6C16.6 9.5 16.1 11.1 15.1 11.9C14.1 12.7 12.3 13.2 11.0 13.3C9.7 13.5 8.5 13.2 7.5 12.8C6.5 12.4 5.4 11.4 5.1 10.7C4.8 10.0 5.2 8.9 5.6 8.4C6.0 7.9 6.9 7.5 7.5 7.6C8.1 7.7 8.5 8.5 9.0 9.0C9.5 9.5 9.9 10.3 10.5 10.4C11.1 10.5 12.0 10.1 12.4 9.6C12.8 9.1 13.2 8.0 12.9 7.3C12.6 6.6 11.5 5.6 10.5 5.2C9.5 4.8 8.3 4.5 7.0 4.7C5.7 4.8 3.9 5.3 2.9 6.1C1.9 6.9 1.4 8.5 1.2 9.4C1.0 10.3 1.1 10.7 1.7 11.7C2.3 12.7 3.4 14.4 4.7 15.2C6.0 16.0 8.1 16.4 9.4 16.6C10.8 16.8 11.8 16.5 12.8 16.3C13.8 16.1 14.9 15.6 15.3 15.5"/></svg>
  <svg class="abs" style="left:11px;top:91px" width="18" height="20" viewBox="0 0 18 20" fill="none" stroke="#ced0d6" stroke-width="1.4"><ellipse cx="9" cy="4.5" rx="7.3" ry="3.2"/><path d="M1.700 4.5v11c0 1.8 3.3 3.2 7.3 3.2s7.300-1.4 7.3-3.2v-11"/><path d="M1.700 8.2c0 1.8 3.3 3.2 7.3 3.2s7.300-1.4 7.3-3.2M1.700 11.9c0 1.8 3.3 3.2 7.3 3.2s7.300-1.4 7.3-3.2"/></svg>
  <svg class="abs" style="left:11.5px;top:132px" width="17" height="17" viewBox="0 0 17 17"><circle cx="8.5" cy="8.5" r="8.3" fill="#ced0d6"/><path d="M0 6h17M0 11h17" stroke="#2b2d30" stroke-width="1.1"/><ellipse cx="8.5" cy="8.5" rx="4.5" ry="5.6" fill="#ced0d6"/><path d="M5.500 4l6 9M11.500 4l-6 9" stroke="#2b2d30" stroke-width="3.8"/><path d="M5.500 4l6 9M11.500 4l-6 9" stroke="#e6e7ea" stroke-width="1.7"/></svg>
  <div class="abs" style="left:6px;top:164px;width:28px;height:30px;line-height:30px;text-align:center;font-style:italic;font-size:23px;color:#ced0d6;letter-spacing:0">m</div>
  <div class="abs" style="left:8px;top:206px;width:24px;height:1px;background:#43454a"></div>
  <div class="abs" style="left:11px;top:222.5px;width:18px;height:18px;border-radius:4px;background:linear-gradient(140deg,#f23c7c,#ff5f62)"></div>
  <svg class="abs" style="left:11px;top:222.5px" width="18" height="18" viewBox="0 0 18 18"><defs><mask id="mk1"><rect width="18" height="18" fill="#fff"/><circle cx="9.6" cy="6.4" r="3.7" fill="#000"/></mask></defs><circle cx="9.1" cy="10.1" r="5.6" fill="#fff" mask="url(#mk1)"/></svg>
</div>
<div class="abs" style="left:0;top:40px;width:1920px;height:1px;background:#1e1f22"></div>
<div id="status">
  <div class="abs" style="left:14px;top:10px;width:8px;height:8px;border:1.3px solid #548af7;border-radius:2px;background:#25324d"></div>
  <div class="s" style="left:26.5px;letter-spacing:-0.4px">newsBackEnd</div><svg class="abs" style="left:114px;top:10px" width="6" height="9" viewBox="0 0 6 9" fill="none" stroke="#868a91" stroke-width="1.1"><path d="M0.800 0.5l4 4-4 4"/></svg><div class="s" style="left:129px;letter-spacing:0px">src</div><svg class="abs" style="left:156px;top:10px" width="6" height="9" viewBox="0 0 6 9" fill="none" stroke="#868a91" stroke-width="1.1"><path d="M0.800 0.5l4 4-4 4"/></svg><div class="s" style="left:170px;letter-spacing:0px">main</div><svg class="abs" style="left:207.5px;top:10px" width="6" height="9" viewBox="0 0 6 9" fill="none" stroke="#868a91" stroke-width="1.1"><path d="M0.800 0.5l4 4-4 4"/></svg><div class="s" style="left:221.5px;letter-spacing:0px">java</div><svg class="abs" style="left:255px;top:10px" width="6" height="9" viewBox="0 0 6 9" fill="none" stroke="#868a91" stroke-width="1.1"><path d="M0.800 0.5l4 4-4 4"/></svg><div class="s" style="left:269px;letter-spacing:0px">com</div><svg class="abs" style="left:304px;top:10px" width="6" height="9" viewBox="0 0 6 9" fill="none" stroke="#868a91" stroke-width="1.1"><path d="M0.800 0.5l4 4-4 4"/></svg><div class="s" style="left:318px;letter-spacing:0.1px">dreamxiao</div><svg class="abs" style="left:390px;top:10px" width="6" height="9" viewBox="0 0 6 9" fill="none" stroke="#868a91" stroke-width="1.1"><path d="M0.800 0.5l4 4-4 4"/></svg><div class="s" style="left:404.5px;letter-spacing:-0.1px">newsbackend</div><svg class="abs" style="left:493px;top:10px" width="6" height="9" viewBox="0 0 6 9" fill="none" stroke="#868a91" stroke-width="1.1"><path d="M0.800 0.5l4 4-4 4"/></svg>
  <svg class="abs" style="left:507px;top:6px" width="17" height="17" viewBox="0 0 17 17" fill="none"><circle cx="8" cy="8" r="6.5" fill="#25324d" stroke="#548af7" stroke-width="1.1"/><path d="M10.300 6.1a3 3 0 1 0 0 3.8" stroke="#548af7" stroke-width="1.1"/><rect x="8.6" y="-1" width="8.5" height="9" fill="#2b2d30"/><path d="M9.600 0.6l6 3.6-6 3.6z" fill="#253627" stroke="#57965c" stroke-width="1" stroke-linejoin="round"/><circle cx="12.5" cy="12.6" r="4.6" fill="#2b2d30"/><path d="M10.59 10.16a3.1 3.1 0 1 0 3.82 0" stroke="#ced0d6" stroke-width="1.1"/><path d="M12.5 8.2v4.00" stroke="#ced0d6" stroke-width="1.1"/></svg>
  <div class="s" style="left:527px;letter-spacing:-0.05px">NewsBackEndApplication</div>
  <svg class="abs" style="left:1636px;top:9px" width="17" height="13" viewBox="0 0 21 16"><rect x="0" y="8.2" width="4.4" height="4.1" fill="#2f7bf6"/><path d="M5 0.3H20.200V4.400H9V8H20.200V12.500H14V15.700H9V8H5Z" fill="#39a4f8"/></svg>
  <div class="s" style="left:1669px;letter-spacing:0px">6:23</div><div class="s" style="left:1741px;letter-spacing:0px">LF</div><div class="s" style="left:1769.5px;letter-spacing:-0.6px">UTF-8</div><div class="s" style="left:1823px;letter-spacing:0.15px;font-size:12px">4 个空格</div>
  <svg class="abs" style="left:1709px;top:10px" width="16" height="9" viewBox="0 0 16 9" fill="none" stroke="#a8adb5" stroke-width="1.1"><path d="M4.300 0.7l-3.6 3.8 3.6 3.8M11.700 0.7l3.600 3.8-3.6 3.8"/><circle cx="5.8" cy="4.5" r=".6" fill="#a8adb5" stroke="none"/><circle cx="8" cy="4.5" r=".6" fill="#a8adb5" stroke="none"/><circle cx="10.2" cy="4.5" r=".6" fill="#a8adb5" stroke="none"/></svg>
</div>
<div class="abs" style="left:1874px;top:1000px;width:46px;height:32px;background:#fff;border-left:3px solid #2ea7e8"></div>
<div class="abs" style="left:1877px;top:1000px;width:43px;height:32px;line-height:31px;text-align:center;font-size:16px;font-weight:500;color:#3b8ec4;font-family:'Noto Sans CJK SC','Liberation Sans',sans-serif">中</div>
</body>
</html>
